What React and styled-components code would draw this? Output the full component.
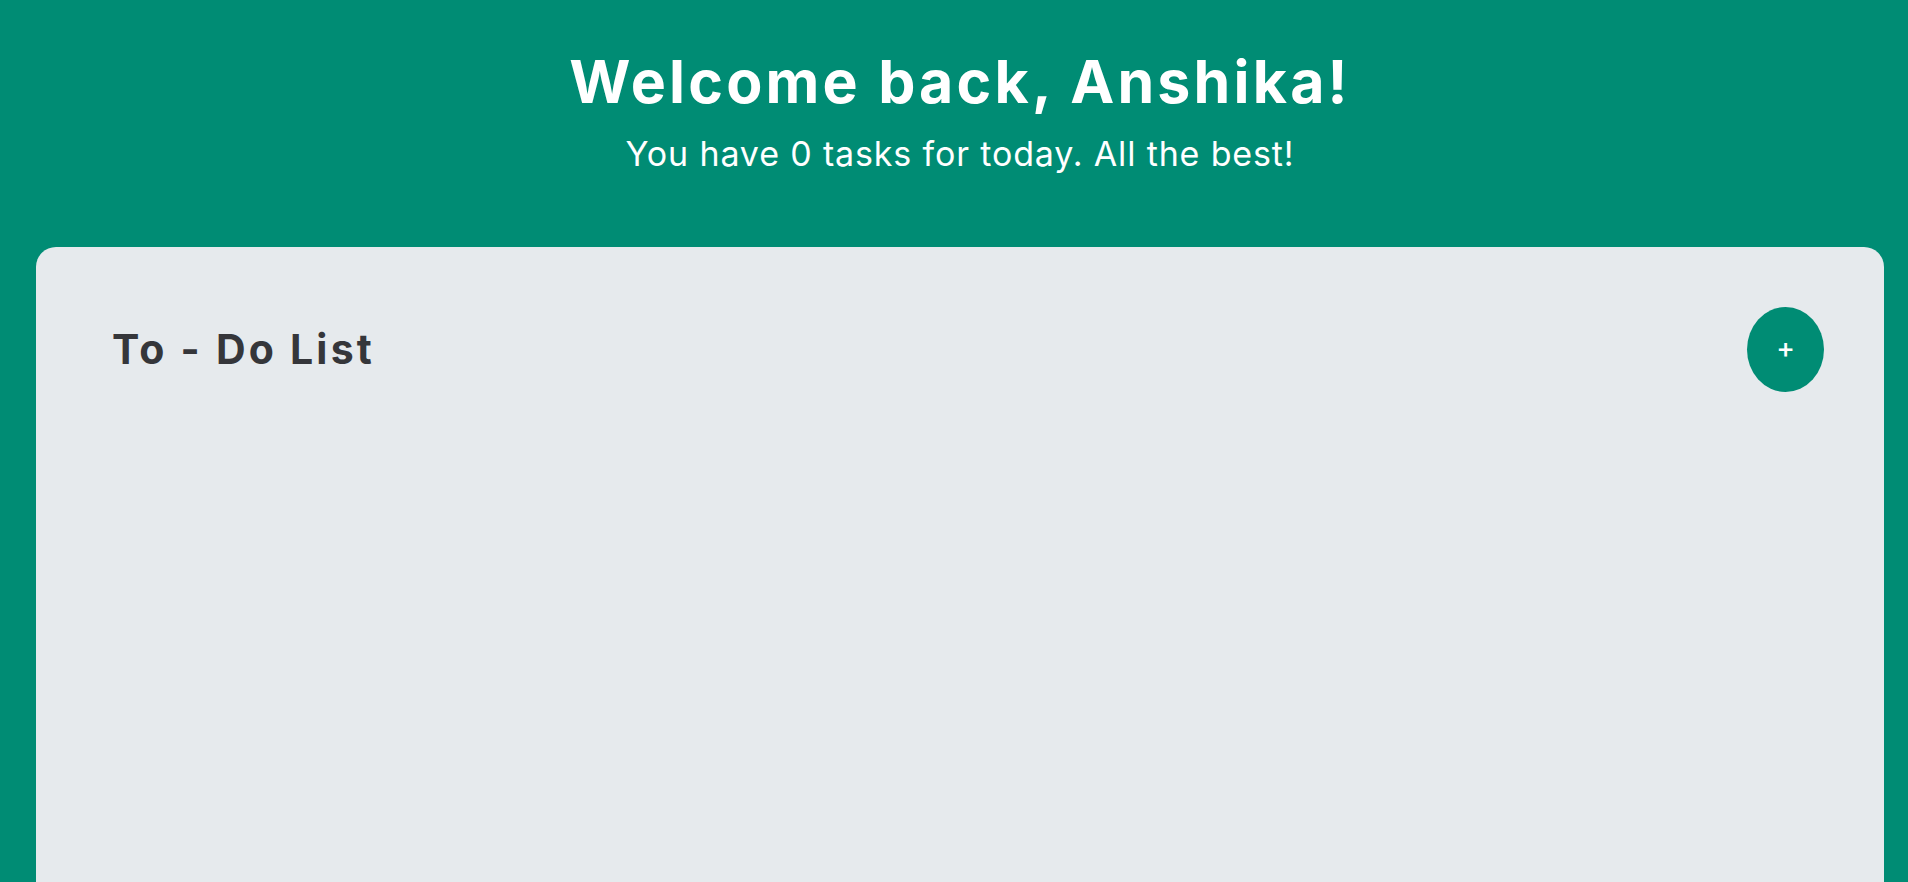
import React from "react";
import styled, { createGlobalStyle } from "styled-components";

const GlobalStyle = createGlobalStyle`
  html, body {
    margin: 0;
    padding: 0;
    background: #008c74;
    font-family: Inter, "Open Sans", sans-serif;
    overflow: hidden;
  }
`;

const Page = styled.div`
  min-height: 100vh;
  padding: 0 24px 0 36px;
  box-sizing: border-box;
`;

const Header = styled.header`
  padding-top: 52px;
  padding-bottom: 76px;
  text-align: center;
  color: white;
`;

const Title = styled.h1`
  margin: 0;
  font-size: 59px;
  line-height: 1;
  font-weight: 700;
  letter-spacing: 3.2px;
`;

const Subtitle = styled.p`
  margin: 26px 0 0;
  font-size: 34px;
  line-height: 1;
  font-weight: 400;
  letter-spacing: 0.85px;
`;

const Card = styled.section`
  background: #e6eaed;
  border-radius: 20px 20px 0 0;
  min-height: 720px;
  padding: 60px 60px 0 76px;
  box-sizing: border-box;
`;

const CardHead = styled.div`
  display: flex;
  align-items: center;
  justify-content: space-between;
`;

const ListTitle = styled.h2`
  margin: 0;
  font-size: 41px;
  line-height: 1;
  font-weight: 700;
  color: #35363a;
  letter-spacing: 3.2px;
`;

const AddButton = styled.button`
  width: 77px;
  height: 85px;
  border: none;
  border-radius: 50%;
  background: #008c74;
  color: white;
  font-family: Inter, sans-serif;
  font-size: 28px;
  font-weight: 500;
  line-height: 1;
  cursor: pointer;
  display: flex;
  align-items: center;
  justify-content: center;
  padding: 0 0 3px;
`;

export default function App() {
  const tasks = [];
  return (
    <>
      <GlobalStyle />
      <Page>
        <Header>
          <Title>Welcome back, Anshika!</Title>
          <Subtitle>
            You have {tasks.length} tasks for today. All the best!
          </Subtitle>
        </Header>
        <Card>
          <CardHead>
            <ListTitle>To - Do List</ListTitle>
            <AddButton>+</AddButton>
          </CardHead>
        </Card>
      </Page>
    </>
  );
}
